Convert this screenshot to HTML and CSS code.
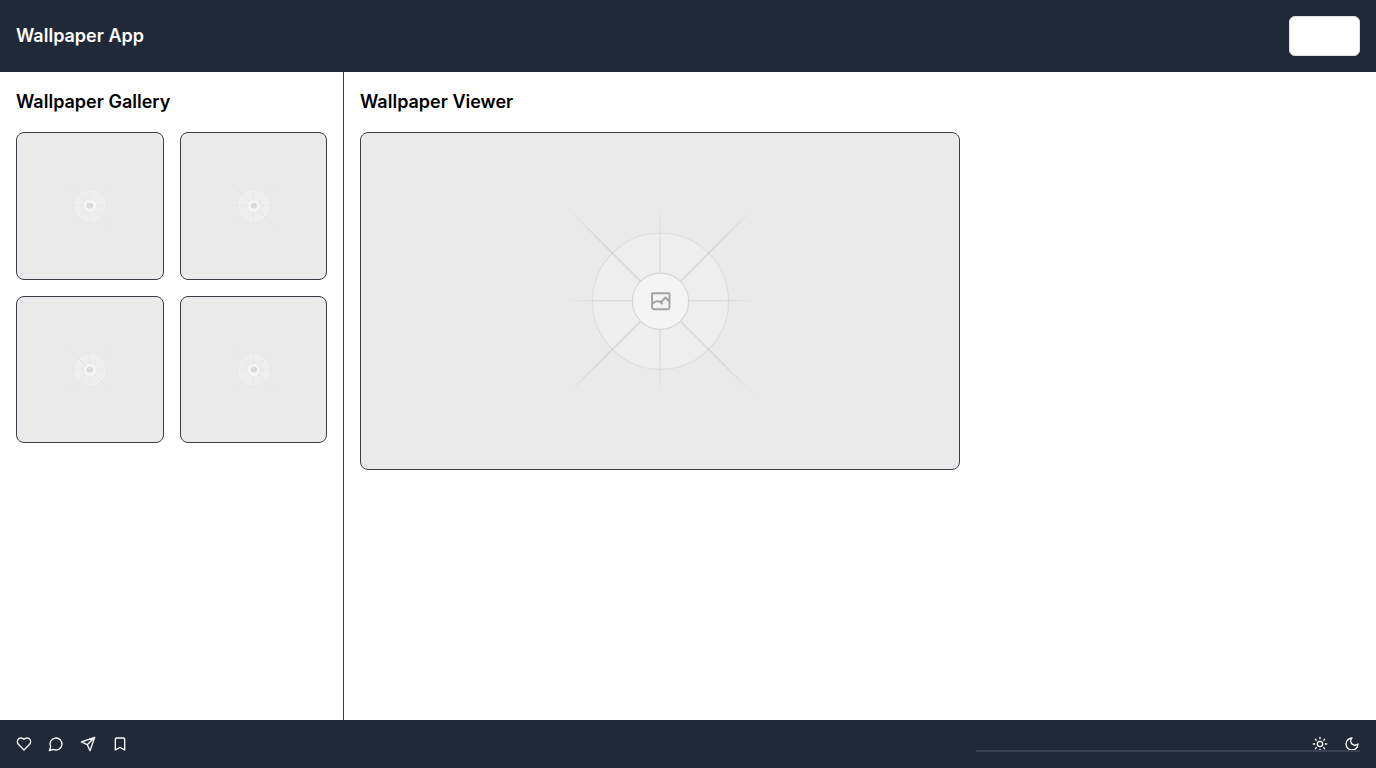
FILE: index.html
```html
<!DOCTYPE html>
<html lang="en">
<head>
<meta charset="utf-8">
<meta name="viewport" content="width=device-width, initial-scale=1">
<title>Wallpaper App</title>
<link rel="stylesheet" href="styles.css">
</head>
<body>
<svg class="defs" aria-hidden="true">
  <defs>
    <linearGradient id="fade-h" gradientUnits="userSpaceOnUse" x1="408" y1="601" x2="794" y2="601">
      <stop offset="0" stop-color="#c9c9c9" stop-opacity="0"/><stop offset=".21" stop-color="#c9c9c9" stop-opacity=".65"/><stop offset=".79" stop-color="#c9c9c9" stop-opacity=".65"/><stop offset="1" stop-color="#c9c9c9" stop-opacity="0"/>
    </linearGradient>
    <linearGradient id="fade-v" gradientUnits="userSpaceOnUse" x1="601" y1="408" x2="601" y2="794">
      <stop offset="0" stop-color="#c9c9c9" stop-opacity="0"/><stop offset=".21" stop-color="#c9c9c9" stop-opacity=".65"/><stop offset=".79" stop-color="#c9c9c9" stop-opacity=".65"/><stop offset="1" stop-color="#c9c9c9" stop-opacity="0"/>
    </linearGradient>
    <symbol id="placeholder" viewBox="0 0 1200 1200" preserveAspectRatio="xMidYMid slice">
      <circle cx="601" cy="601" r="136.5" fill="#fafafa" fill-opacity=".3" stroke="#c9c9c9" stroke-opacity=".4" stroke-width="2.4"/>
      <path fill="url(#fade-h)" d="M408 598.6h386v2.4H408z"/>
      <path fill="url(#fade-v)" d="M599 408h2.4v386H599z"/>
      <path fill="none" stroke="url(#fade-h)" stroke-width="3" d="M408 408l386 386M794 408L408 794"/>
      <circle cx="601" cy="601" r="56.5" fill="#f4f4f4" stroke="#d6d6d6" stroke-width="2.4"/>
      <path d="M584 585h35v27q0 5-5 5h-25q-5 0-5-5zM584 606q6-6 12-5q5 0 9 6M599 602h4l8-9 8 9" fill="none" stroke="#a3a3a3" stroke-width="3.8" stroke-linejoin="round"/>
    </symbol>
  </defs>
</svg>
<div class="app">
  <header class="header">
    <h1 class="title">Wallpaper App</h1>
    <button class="header-button" type="button" aria-label="Login"></button>
  </header>
  <main class="main">
    <aside class="gallery">
      <h2 class="title">Wallpaper Gallery</h2>
      <div class="gallery-grid">
        <svg class="picture thumb" role="img" aria-label="Wallpaper 1"><use href="#placeholder"/></svg>
        <svg class="picture thumb" role="img" aria-label="Wallpaper 2"><use href="#placeholder"/></svg>
        <svg class="picture thumb" role="img" aria-label="Wallpaper 3"><use href="#placeholder"/></svg>
        <svg class="picture thumb" role="img" aria-label="Wallpaper 4"><use href="#placeholder"/></svg>
      </div>
    </aside>
    <section class="viewer">
      <h2 class="title">Wallpaper Viewer</h2>
      <svg class="picture preview" role="img" aria-label="Selected wallpaper"><use href="#placeholder"/></svg>
    </section>
  </main>
  <footer class="footer">
    <div class="actions">
      <button class="icon-button" type="button" aria-label="Like"><svg class="icon" viewBox="0 0 24 24"><path d="M19 14c1.49-1.46 3-3.21 3-5.5A5.5 5.5 0 0 0 16.5 3c-1.76 0-3 .5-4.5 2-1.5-1.5-2.74-2-4.5-2A5.5 5.5 0 0 0 2 8.5c0 2.3 1.5 4.05 3 5.5l7 7Z"/></svg></button>
      <button class="icon-button" type="button" aria-label="Comment"><svg class="icon" viewBox="0 0 24 24"><path d="M7.9 20A9 9 0 1 0 4 16.1L2 22Z"/></svg></button>
      <button class="icon-button" type="button" aria-label="Share"><svg class="icon" viewBox="0 0 24 24"><path d="m22 2-7 20-4-9-9-4ZM22 2 11 13"/></svg></button>
      <button class="icon-button" type="button" aria-label="Save"><svg class="icon" viewBox="0 0 24 24"><path d="m19 21-7-4-7 4V5a2 2 0 0 1 2-2h10a2 2 0 0 1 2 2v16z"/></svg></button>
    </div>
    <div class="actions">
      <button class="icon-button" type="button" aria-label="Light mode"><svg class="icon" viewBox="0 0 24 24"><circle cx="12" cy="12" r="4"/><path d="M12 2v2M12 20v2M4.93 4.93l1.41 1.41M17.66 17.66l1.41 1.41M2 12h2M20 12h2M6.34 17.66l-1.41 1.41M19.07 4.93l-1.41 1.41"/></svg></button>
      <button class="icon-button" type="button" aria-label="Dark mode"><svg class="icon" viewBox="0 0 24 24"><path d="M12 3a6 6 0 0 0 9 9 9 9 0 1 1-9-9Z"/></svg></button>
    </div>
    <div class="track"></div>
  </footer>
</div>
</body>
</html>
```
FILE: styles.css
```css
* {
  box-sizing: border-box;
}

body {
  margin: 0;
  background: #fff;
  color: #000;
  font-family: Inter, "Liberation Sans", sans-serif;
}

.defs {
  position: absolute;
  width: 0;
  height: 0;
}

.app {
  display: flex;
  flex-direction: column;
  min-height: 100vh;
}

.header,
.footer {
  display: flex;
  align-items: center;
  justify-content: space-between;
  padding: 16px;
  background: #1f2937;
  color: #fff;
}

.title {
  margin: 0;
  font-size: 18px;
  line-height: 28px;
  font-weight: 600;
}

.header-button {
  min-width: 71px;
  height: 40px;
  padding: 8px 16px;
  border: 1px solid #e4e4e7;
  border-radius: 6px;
  background: #fff;
}

.main {
  display: grid;
  flex: 1;
  grid-template-columns: 1fr 3fr;
}

.gallery,
.viewer {
  display: flex;
  flex-direction: column;
  align-items: stretch;
  gap: 16px;
  padding: 16px;
}

.gallery {
  border-right: 1px solid #3b3b48;
}

.gallery-grid {
  display: grid;
  grid-template-columns: 1fr 1fr;
  gap: 16px;
}

.picture {
  display: block;
  width: 100%;
  border: 1px solid #3b3b48;
  border-radius: 8px;
  background: #eaeaea;
}

.thumb {
  aspect-ratio: 1;
}

.preview {
  max-width: 600px;
  aspect-ratio: 16 / 9;
}

.footer {
  position: relative;
}

.actions {
  display: flex;
  gap: 16px;
}

.icon-button {
  display: flex;
  padding: 0;
  border: 0;
  background: none;
  color: inherit;
}

.icon {
  width: 16px;
  height: 16px;
  fill: none;
  stroke: currentColor;
  stroke-width: 2;
  stroke-linecap: round;
  stroke-linejoin: round;
}

.track {
  position: absolute;
  right: 16px;
  bottom: 16px;
  width: 384px;
  height: 2px;
  background: #374151;
}
```
